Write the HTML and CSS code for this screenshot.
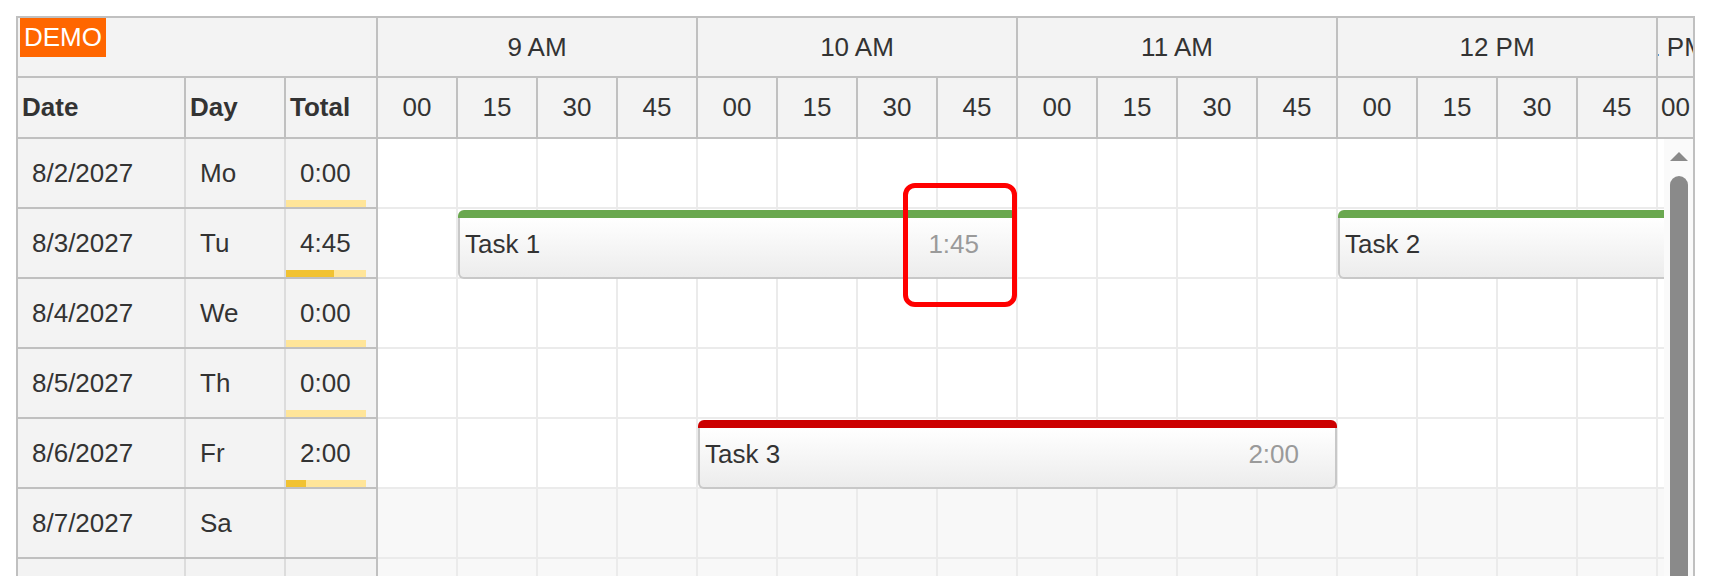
FILE: index.html
```html
<!DOCTYPE html>
<html lang="en">
<head>
<meta charset="utf-8">
<title>Scheduler</title>
<link rel="stylesheet" href="styles.css">
</head>
<body>
<div class="scheduler">
  <div class="left">
    <div class="corner"></div>
    <div class="lhead">
      <div class="hc">Date</div><div class="hc">Day</div><div class="hc last">Total</div>
    </div>
    <div class="lrow">
      <div class="bc">8/2/2027</div><div class="bc">Mo</div>
      <div class="bc total"><span class="tt">0:00</span><span class="bar"><span class="fill" style="width:0px"></span></span></div>
    </div>
    <div class="lrow">
      <div class="bc">8/3/2027</div><div class="bc">Tu</div>
      <div class="bc total"><span class="tt">4:45</span><span class="bar"><span class="fill" style="width:48px"></span></span></div>
    </div>
    <div class="lrow">
      <div class="bc">8/4/2027</div><div class="bc">We</div>
      <div class="bc total"><span class="tt">0:00</span><span class="bar"><span class="fill" style="width:0px"></span></span></div>
    </div>
    <div class="lrow">
      <div class="bc">8/5/2027</div><div class="bc">Th</div>
      <div class="bc total"><span class="tt">0:00</span><span class="bar"><span class="fill" style="width:0px"></span></span></div>
    </div>
    <div class="lrow">
      <div class="bc">8/6/2027</div><div class="bc">Fr</div>
      <div class="bc total"><span class="tt">2:00</span><span class="bar"><span class="fill" style="width:20px"></span></span></div>
    </div>
    <div class="lrow">
      <div class="bc">8/7/2027</div><div class="bc">Sa</div>
      <div class="bc total"></div>
    </div>
    <div class="lrow">
      <div class="bc"></div><div class="bc"></div>
      <div class="bc total"></div>
    </div>
  </div>

  <div class="right">
    <div class="hours">
      <div class="th span4">9 AM</div>
      <div class="th span4">10 AM</div>
      <div class="th span4">11 AM</div>
      <div class="th span4">12 PM</div>
      <div class="th end">1 PM</div>
    </div>
    <div class="mins">
      <div class="th">00</div><div class="th">15</div><div class="th">30</div><div class="th">45</div>
      <div class="th">00</div><div class="th">15</div><div class="th">30</div><div class="th">45</div>
      <div class="th">00</div><div class="th">15</div><div class="th">30</div><div class="th">45</div>
      <div class="th">00</div><div class="th">15</div><div class="th">30</div><div class="th">45</div>
      <div class="th end">00</div>
    </div>
    <div class="tbody">
      <div class="viewport">
        <div class="trow">
          <i></i><i></i><i></i><i></i><i></i><i></i><i></i><i></i><i></i><i></i><i></i><i></i><i></i><i></i><i></i><i></i><i></i>
        </div>
        <div class="trow">
          <i></i><i></i><i></i><i></i><i></i><i></i><i></i><i></i><i></i><i></i><i></i><i></i><i></i><i></i><i></i><i></i><i></i>
          <div class="event green" style="left:80px;width:559px">
            <div class="ebar"></div>
            <div class="ebody"><span>Task 1</span><span class="dur">1:45</span></div>
          </div>
          <div class="event green" style="left:960px;width:800px">
            <div class="ebar"></div>
            <div class="ebody"><span>Task 2</span></div>
          </div>
        </div>
        <div class="trow">
          <i></i><i></i><i></i><i></i><i></i><i></i><i></i><i></i><i></i><i></i><i></i><i></i><i></i><i></i><i></i><i></i><i></i>
        </div>
        <div class="trow">
          <i></i><i></i><i></i><i></i><i></i><i></i><i></i><i></i><i></i><i></i><i></i><i></i><i></i><i></i><i></i><i></i><i></i>
        </div>
        <div class="trow">
          <i></i><i></i><i></i><i></i><i></i><i></i><i></i><i></i><i></i><i></i><i></i><i></i><i></i><i></i><i></i><i></i><i></i>
          <div class="event red" style="left:320px;width:639px">
            <div class="ebar"></div>
            <div class="ebody"><span>Task 3</span><span class="dur">2:00</span></div>
          </div>
        </div>
        <div class="trow weekend">
          <i></i><i></i><i></i><i></i><i></i><i></i><i></i><i></i><i></i><i></i><i></i><i></i><i></i><i></i><i></i><i></i><i></i>
        </div>
        <div class="trow weekend">
          <i></i><i></i><i></i><i></i><i></i><i></i><i></i><i></i><i></i><i></i><i></i><i></i><i></i><i></i><i></i><i></i><i></i>
        </div>
      </div>
      <div class="vscroll">
        <div class="arrow"></div>
        <div class="thumb"></div>
      </div>
    </div>
  </div>

  <div class="demo">DEMO</div>
  <div class="highlight"></div>
</div>
</body>
</html>
```

FILE: styles.css
```css
html, body {
  margin: 0;
  padding: 0;
  overflow: hidden;
  background: #ffffff;
}

body {
  font-family: "Liberation Sans", Arial, sans-serif;
  font-size: 26px;
  color: #333333;
}

.scheduler {
  position: relative;
  display: flex;
  align-items: flex-start;
  box-sizing: border-box;
  width: 1679px;
  height: 560px;
  margin: 16px 0 0 16px;
  border: 2px solid #c0c0c0;
  border-bottom: none;
  overflow: hidden;
}

/* ---------- left columns ---------- */
.left {
  box-sizing: border-box;
  width: 360px;
  flex: none;
  border-right: 2px solid #c0c0c0;
  background: #f3f3f3;
}

.corner {
  box-sizing: border-box;
  height: 60px;
  border-bottom: 2px solid #c0c0c0;
}

.lhead,
.lrow {
  display: grid;
  grid-template-columns: 168px 100px 90px;
  box-sizing: border-box;
  border-bottom: 2px solid #c0c0c0;
}

.lhead {
  height: 61px;
}

.lrow {
  height: 70px;
}

.hc {
  display: flex;
  align-items: center;
  box-sizing: border-box;
  padding-left: 4px;
  font-weight: bold;
  border-right: 2px solid #c0c0c0;
}

.hc.last {
  border-right: none;
}

.bc {
  display: flex;
  align-items: center;
  box-sizing: border-box;
  padding-left: 14px;
  border-right: 2px solid #dcdcdc;
}

.bc.total {
  display: grid;
  padding-left: 0;
  border-right: none;
}

.tt {
  grid-area: 1 / 1;
  align-self: center;
  padding-left: 14px;
}

.bar {
  grid-area: 1 / 1;
  align-self: end;
  display: block;
  width: 80px;
  height: 7px;
  background: #ffe599;
}

.fill {
  display: block;
  height: 100%;
  background: #f1c232;
}

/* ---------- timeline ---------- */
.right {
  display: flex;
  flex-direction: column;
  width: 1315px;
  flex: none;
}

.hours,
.mins {
  display: grid;
  grid-template-columns: repeat(16, 80px) 35px;
  flex: none;
  box-sizing: border-box;
  height: 60px;
  background: #f3f3f3;
  border-bottom: 2px solid #c0c0c0;
}

.mins {
  height: 61px;
}

.th {
  display: flex;
  align-items: center;
  justify-content: center;
  box-sizing: border-box;
  border-right: 2px solid #c0c0c0;
  overflow: hidden;
  white-space: nowrap;
}

.th.span4 {
  grid-column: span 4;
}

.th.end {
  border-right: none;
}

.tbody {
  display: flex;
  flex: none;
}

.viewport {
  width: 1286px;
  flex: none;
  overflow: hidden;
  background: #ffffff;
}

.trow {
  position: relative;
  display: flex;
  box-sizing: border-box;
  height: 70px;
  border-bottom: 2px solid #ebebeb;
}

.trow.weekend {
  background: #f8f8f8;
}

.trow i {
  flex: none;
  box-sizing: border-box;
  width: 80px;
  border-right: 2px solid #ebebeb;
}

.event {
  position: absolute;
  top: 1px;
  height: 69px;
  display: flex;
  flex-direction: column;
}

.ebar {
  height: 8px;
  border-radius: 6px 6px 0 0;
  flex: none;
}

.event.green .ebar {
  background: #6aa84f;
}

.event.red .ebar {
  background: #cc0000;
}

.ebody {
  flex: 1;
  display: flex;
  align-items: center;
  justify-content: space-between;
  padding: 0 36px 6px 5px;
  border: 2px solid #c8c8c8;
  border-top: none;
  border-radius: 0 0 6px 6px;
  background: linear-gradient(to bottom, #ffffff, #ececec);
  white-space: nowrap;
}

.dur {
  color: #9a9a9a;
}

.vscroll {
  flex: 1;
  display: flex;
  flex-direction: column;
  align-items: flex-start;
  padding-left: 6px;
  background: #fafafa;
}

.arrow {
  margin-top: 13px;
  width: 0;
  height: 0;
  border-left: 9px solid transparent;
  border-right: 9px solid transparent;
  border-bottom: 9px solid #8a8a8a;
}

.thumb {
  margin-top: 15px;
  width: 18px;
  height: 500px;
  border-radius: 9px 9px 0 0;
  background: #8a8a8a;
}

/* ---------- overlays ---------- */
.demo {
  position: absolute;
  left: 2px;
  top: 0;
  padding: 4px;
  height: 31px;
  line-height: 31px;
  background: #ff6600;
  color: #ffffff;
  font-size: 26px;
}

.highlight {
  position: absolute;
  left: 885px;
  top: 165px;
  box-sizing: border-box;
  width: 114px;
  height: 124px;
  border: 5px solid #ff0000;
  border-radius: 12px;
}
```
